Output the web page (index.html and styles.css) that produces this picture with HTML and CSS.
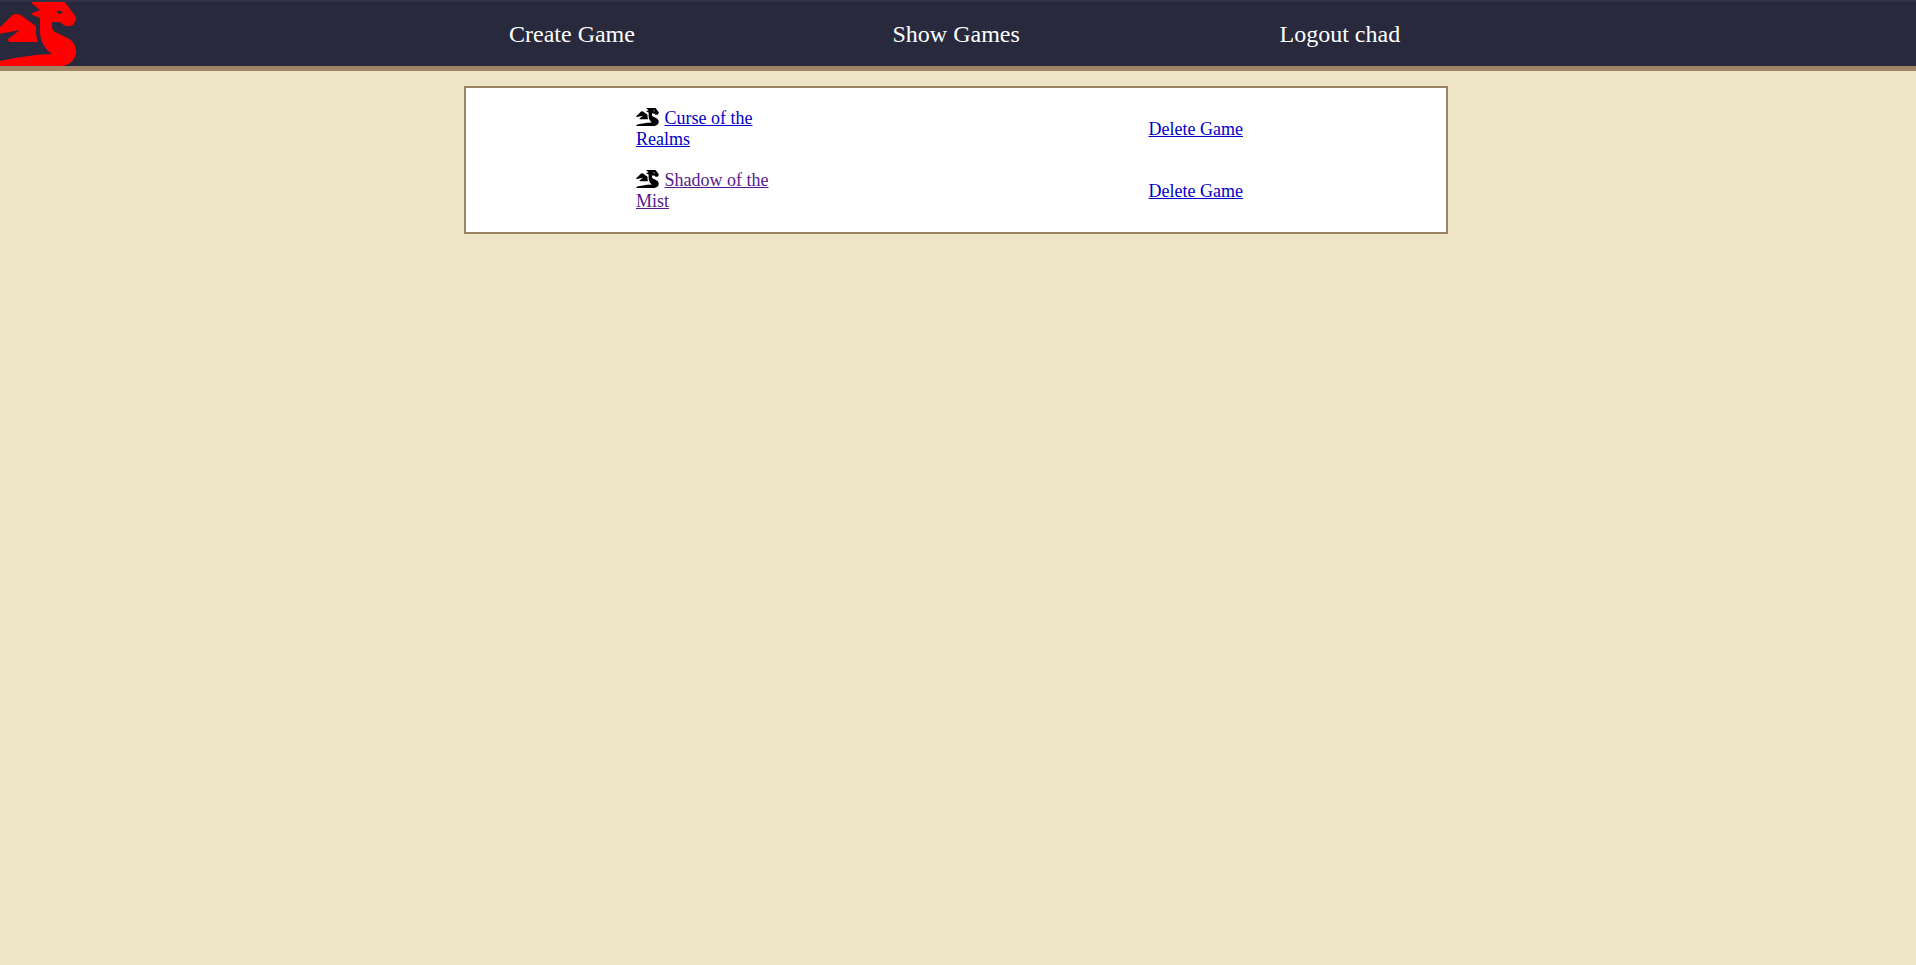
FILE: index.html
```
<!DOCTYPE html>
<html lang="en">
<head>
<meta charset="utf-8">
<title>Games</title>
<link rel="stylesheet" href="styles.css">
</head>
<body>
<svg class="defs" aria-hidden="true"><symbol id="dragon" viewBox="0 0 640 512"><path d="M18.32 255.78L192 223.96l-91.28 68.69c-10.08 10.08-2.94 27.31 11.31 27.31h222.7c-9.44-26.4-14.73-54.47-14.73-83.38v-42.27l-119.73-87.6c-23.82-15.88-55.29-14.01-77.06 4.59L5.81 227.64c-12.38 10.33-3.45 30.42 12.51 28.14zm556.87 34.1l-100.66-50.31A47.992 47.992 0 0 1 448 196.65v-36.69h64l28.09 22.63c6 6 14.14 9.37 22.63 9.37h30.97a32 32 0 0 0 28.62-17.69l14.31-28.62a32.005 32.005 0 0 0-3.02-33.51l-74.53-99.38C553.02 4.7 543.54 0 533.47 0H296.02c-7.13 0-10.7 8.57-5.66 13.61L352 63.96 292.42 88.8c-5.9 2.95-5.9 11.36 0 14.31L352 127.96v108.62c0 72.08 36.03 139.39 96 179.38-195.59 6.81-344.56 41.01-434.1 60.91C5.78 478.67 0 485.88 0 494.2 0 504 7.95 512 17.76 512h499.08c63.29.01 119.61-47.56 122.99-110.76 2.52-47.28-22.73-90.4-64.64-111.36zM489.18 66.25l45.65 11.41c-2.75 10.91-12.47 18.89-24.13 18.26-12.96-.71-25.85-12.53-21.52-29.67z"/></symbol></svg>
<header class="navbar">
  <svg class="logo"><use href="#dragon"/></svg>
  <nav class="links">
    <a href="#create">Create Game</a>
    <a href="#games">Show Games</a>
    <a href="#logout">Logout chad</a>
  </nav>
</header>
<main class="card">
  <div class="row">
    <div class="game"><svg class="icon"><use href="#dragon"/></svg><a class="link" href="#curse">Curse of the Realms</a></div>
    <a class="link" href="#delete-curse">Delete Game</a>
  </div>
  <div class="row">
    <div class="game"><svg class="icon"><use href="#dragon"/></svg><a class="link visited" href="#shadow">Shadow of the Mist</a></div>
    <a class="link" href="#delete-shadow">Delete Game</a>
  </div>
</main>
</body>
</html>
```
FILE: styles.css
```
* { box-sizing: border-box; }
body {
  margin: 0;
  min-height: 100vh;
  background: #eee5c6;
  font: 18px/21px "Liberation Serif", "Times New Roman", serif;
}
.defs { display: none; }
.navbar {
  display: flex;
  height: 71px;
  background: #28293d;
  border-top: 2px solid #313247;
  border-bottom: 5px solid #a08463;
  overflow: hidden;
}
.logo {
  width: 80px;
  height: 64px;
  margin-left: -4px;
  fill: #f00;
  flex: none;
}
.links {
  display: grid;
  grid-template-columns: 383.5px 387px auto;
  margin-left: 433px;
  padding-top: 19px;
  font-size: 24px;
  line-height: 27px;
}
.links a {
  color: #fff;
  text-decoration: none;
}
.card {
  display: flex;
  flex-direction: column;
  gap: 20px;
  width: 984px;
  margin: 15px 0 0 464px;
  padding: 20px 170px;
  background: #fff;
  border: 2px solid #9a8464;
}
.row {
  display: grid;
  grid-template-columns: 140px auto;
  column-gap: 372.5px;
  align-items: center;
  justify-content: start;
}
.icon {
  width: 23px;
  height: 18px;
  margin-right: 5.5px;
  vertical-align: -2px;
}
.link { color: #0000c8; }
.visited { color: #551a8b; }
```
